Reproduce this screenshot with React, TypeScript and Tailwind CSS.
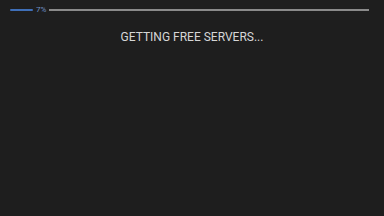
export default function App() {
  const progress = 7

  return (
    <div className="h-[216px] w-[384px] overflow-hidden bg-[#1e1e1e] font-['Roboto',sans-serif]">
      <div className="flex items-center gap-[3px] pl-[10px] pr-[15px] pt-[5px]">
        <div className="h-[2.5px] w-[23px] rounded-full bg-[#3f6fb8]" />
        <span className="text-[8px] leading-[10px] text-[#6f8fc4]">{progress}%</span>
        <div className="h-[2px] flex-1 bg-[#8a8a8a]" />
      </div>
      <div className="mt-[15px] text-center text-[12px] leading-[14px] text-[#d6d6d6]">
        GETTING FREE SERVERS...
      </div>
    </div>
  )
}
